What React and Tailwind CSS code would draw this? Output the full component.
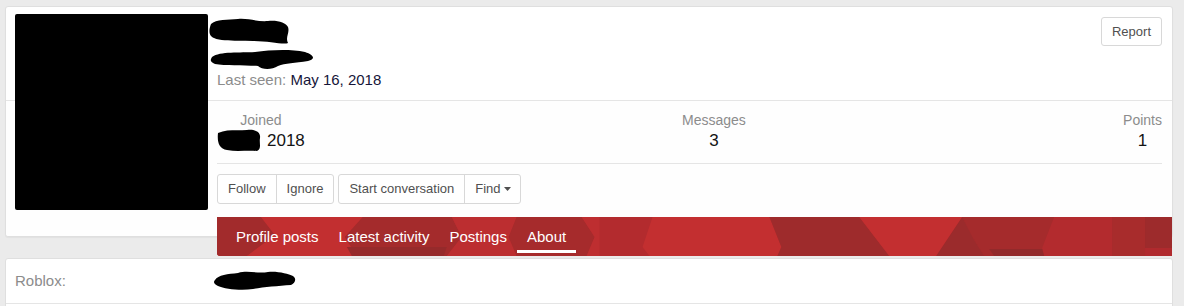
import React from "react";

const font = { fontFamily: '"Liberation Sans", Arial, sans-serif' };

function Blob({ w, h, d, className = "" }) {
  return (
    <svg width={w} height={h} viewBox={`0 0 ${w} ${h}`} className={"block shrink-0 " + className}>
      <path d={d} fill="#000" />
    </svg>
  );
}

function TabPattern() {
  return (
    <svg className="absolute inset-0 w-full h-full" viewBox="0 0 956 39" preserveAspectRatio="none">
      <rect width="956" height="39" fill="#b32b2e" />
      <polygon points="0,0 44,0 58,18 30,39 0,39" fill="#a22b2c" />
      <polygon points="44,0 146,0 128,20 140,39 30,39 58,18" fill="#c22f30" />
      <polygon points="146,0 235,0 245,20 230,39 140,39 128,20" fill="#a42b2c" />
      <polygon points="130,30 230,30 227,39 135,39" fill="#962a2b" />
      <polygon points="235,0 300,0 292,20 300,39 230,39 245,20" fill="#bc2e30" />
      <polygon points="300,0 365,0 378,20 370,39 300,39 292,20" fill="#a62b2c" />
      <polygon points="365,0 383,0 383,39 370,39 378,20" fill="#be2e30" />
      <polygon points="436,0 553,0 565,30 561,39 433,39 426,30" fill="#c32f30" />
      <polygon points="553,0 643,0 673,39 561,39 565,30" fill="#9e2b2c" />
      <polygon points="643,0 746,0 720,39 673,39" fill="#c32f30" />
      <polygon points="746,0 838,0 826,31 828,39 768,39 758,23" fill="#a52b2c" />
      <polygon points="746,0 758,23 768,39 720,39" fill="#9b2b2c" />
      <polygon points="773,32 826,32 828,39 778,39" fill="#922a2b" />
      <polygon points="896,0 929,0 929,39 896,39" fill="#a82c2c" />
      <polygon points="929,0 956,0 956,31 929,31" fill="#9d2b2c" />
      <polygon points="929,31 956,31 956,39 929,39" fill="#b02a2e" />
    </svg>
  );
}

function Stat({ label, children }) {
  return (
    <dl className="text-center">
      <dt className="text-[14px] leading-[20px] text-[#8c8c8c]">{label}</dt>
      <dd className="text-[17px] leading-[22px] text-[#141414]">{children}</dd>
    </dl>
  );
}

function Tab({ children, active }) {
  return (
    <a className="relative flex flex-col pt-[10px] text-[15px] leading-[20px] text-white cursor-pointer">
      <span className="px-[10px]">{children}</span>
      <span className={"mt-[3px] h-[3px] " + (active ? "bg-white" : "bg-transparent")} />
    </a>
  );
}

export default function App() {
  return (
    <div className="min-h-[306px] bg-[#ebebeb] pt-[6px] pl-[5px] pr-[11px] pb-[10px]" style={font}>
      <div className="relative bg-white border border-[#dfdfdf] rounded-[3px] shadow-[0_1px_1px_rgba(0,0,0,0.04)]">
        <div className="absolute left-[9px] top-[7px] w-[193px] h-[196px] bg-black rounded-[2px] z-10" />
        <div className="flex justify-between border-b border-[#e5e5e5] pl-[211px] pr-[10px] pt-[10px] pb-[10px]">
          <div className="flex flex-col">
            <Blob
              w={82}
              h={28}
              className="-ml-[9px]"
              d="M3 7 C8 2 20 3 30 2 C40 1 50 5 60 4 C70 3 78 6 80 10 C82 16 77 20 80 26 C76 28 60 24 45 24 C30 23 15 25 6 21 C0 19 1 12 3 7 Z"
            />
            <Blob
              w={105}
              h={22}
              className="-ml-[7px] mt-[3px]"
              d="M2 9 C10 3 30 5 45 4 C60 2 80 1 95 4 C104 7 106 11 98 13 C85 15 75 15 68 18 C62 22 52 22 48 18 C35 17 15 18 5 16 C0 14 0 12 2 9 Z"
            />
            <div className="text-[15px] leading-[20px]">
              <span className="text-[#8c8c8c]">Last seen:</span>{" "}
              <span className="text-[#16163a]">May 16, 2018</span>
            </div>
          </div>
          <button className="self-start h-[29px] px-[10px] border border-[#d8d8d8] rounded-[3px] bg-white text-[13px] text-[#505050]">
            Report
          </button>
        </div>
        <div className="flow-root bg-[#fefefe] pl-[211px] pr-[10px] pt-[9px] rounded-b-[3px]">
          <div className="flex justify-between pb-[11px] border-b border-[#e5e5e5]">
            <Stat label="Joined">
              <span className="flex items-start justify-center h-[22px]">
                <Blob
                  w={45}
                  h={24}
                  className="-mt-[2px]"
                  d="M1 5 C10 1 20 3 30 2 C38 1 44 4 43 10 C42 16 45 20 40 23 C30 22 20 24 10 22 C2 21 0 14 1 5 Z"
                />
                <span className="ml-[5px]">2018</span>
              </span>
            </Stat>
            <Stat label="Messages">3</Stat>
            <Stat label="Points">1</Stat>
          </div>
          <div className="mt-[10px] flex gap-[4px] text-[13px] text-[#505050]">
            <div className="flex h-[30px] border border-[#d8d8d8] rounded-[3px] bg-white">
              <button className="px-[10px]">Follow</button>
              <button className="px-[10px] border-l border-[#d8d8d8]">Ignore</button>
            </div>
            <div className="flex h-[30px] border border-[#d8d8d8] rounded-[3px] bg-white">
              <button className="px-[10px]">Start conversation</button>
              <button className="pl-[10px] pr-[9px] border-l border-[#d8d8d8] flex items-center gap-[3px]">
                <span>Find</span>
                <svg width="7" height="4" viewBox="0 0 7 4">
                  <path d="M0 0 L7 0 L3.5 4 Z" fill="#505050" />
                </svg>
              </button>
            </div>
          </div>
          <div className="relative mt-[13px] -mr-[10px] -mb-[20px] h-[39px] rounded-bl-[3px] overflow-hidden pl-[9px] flex">
            <TabPattern />
            <Tab>Profile posts</Tab>
            <Tab>Latest activity</Tab>
            <Tab>Postings</Tab>
            <Tab active>About</Tab>
          </div>
        </div>
      </div>

      <div className="mt-[21px] bg-white border border-[#dfdfdf] rounded-[3px] pb-[20px]">
        <div className="flex items-start pl-[9px] py-[12px] border-b border-[#e5e5e5]">
          <div className="w-[198px] text-[15px] leading-[20px] text-[#8c8c8c]">Roblox:</div>
          <Blob
            w={83}
            h={21}
            className="-mt-[1px]"
            d="M2 10 C5 5 15 4 25 3 C35 0 45 4 55 2 C65 1 75 4 80 6 C84 9 82 13 78 15 C65 16 50 17 40 19 C28 21 12 19 5 16 C1 14 0 12 2 10 Z"
          />
        </div>
      </div>
    </div>
  );
}
